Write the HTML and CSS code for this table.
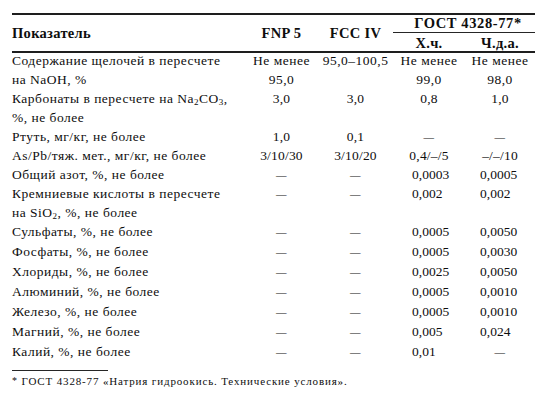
FILE: index.html
```html
<!DOCTYPE html>
<html>
<head>
  <meta charset="utf-8">
  <title>Показатели гидроксида натрия</title>
  <link rel="stylesheet" href="styles.css">
</head>
<body>
  <div class="page">
    <table class="spec">
      <colgroup>
        <col class="c-name">
        <col class="c-fnp">
        <col class="c-fcc">
        <col class="c-hch">
        <col class="c-chda">
      </colgroup>
      <thead>
        <tr class="head-top">
          <th class="name" rowspan="2">Показатель</th>
          <th rowspan="2">FNP 5</th>
          <th rowspan="2">FCC IV</th>
          <th class="gost" colspan="2">ГОСТ 4328-77*</th>
        </tr>
        <tr class="head-sub">
          <th>Х.ч.</th>
          <th>Ч.д.а.</th>
        </tr>
      </thead>
      <tbody>
        <tr class="first">
          <td class="name">Содержание щелочей в пересчете<br>на NaOH, %</td>
          <td>Не менее<br>95,0</td>
          <td>95,0–100,5</td>
          <td>Не менее<br>99,0</td>
          <td>Не менее<br>98,0</td>
        </tr>
        <tr>
          <td class="name">Карбонаты в пересчете на Na<sub>2</sub>CO<sub>3</sub>,<br>%, не более</td>
          <td class="val">3,0</td>
          <td class="val">3,0</td>
          <td class="val">0,8</td>
          <td class="val">1,0</td>
        </tr>
        <tr>
          <td class="name">Ртуть, мг/кг, не более</td>
          <td class="val">1,0</td>
          <td class="val">0,1</td>
          <td><span class="dash">—</span></td>
          <td><span class="dash">—</span></td>
        </tr>
        <tr>
          <td class="name">As/Pb/тяж. мет., мг/кг, не более</td>
          <td class="val">3/10/30</td>
          <td class="val">3/10/20</td>
          <td class="val">0,4/–/5</td>
          <td class="val">–/–/10</td>
        </tr>
        <tr>
          <td class="name">Общий азот, %, не более</td>
          <td><span class="dash">—</span></td>
          <td><span class="dash">—</span></td>
          <td class="num3">0,0003</td>
          <td class="num4">0,0005</td>
        </tr>
        <tr>
          <td class="name">Кремниевые кислоты в пересчете<br>на SiO<sub>2</sub>, %, не более</td>
          <td><span class="dash">—</span></td>
          <td><span class="dash">—</span></td>
          <td class="num3">0,002</td>
          <td class="num4">0,002</td>
        </tr>
        <tr class="loose">
          <td class="name">Сульфаты, %, не более</td>
          <td><span class="dash">—</span></td>
          <td><span class="dash">—</span></td>
          <td class="num3">0,0005</td>
          <td class="num4">0,0050</td>
        </tr>
        <tr class="loose">
          <td class="name">Фосфаты, %, не более</td>
          <td><span class="dash">—</span></td>
          <td><span class="dash">—</span></td>
          <td class="num3">0,0005</td>
          <td class="num4">0,0030</td>
        </tr>
        <tr class="loose">
          <td class="name">Хлориды, %, не более</td>
          <td><span class="dash">—</span></td>
          <td><span class="dash">—</span></td>
          <td class="num3">0,0025</td>
          <td class="num4">0,0050</td>
        </tr>
        <tr class="loose">
          <td class="name">Алюминий, %, не более</td>
          <td><span class="dash">—</span></td>
          <td><span class="dash">—</span></td>
          <td class="num3">0,0005</td>
          <td class="num4">0,0010</td>
        </tr>
        <tr class="loose">
          <td class="name">Железо, %, не более</td>
          <td><span class="dash">—</span></td>
          <td><span class="dash">—</span></td>
          <td class="num3">0,0005</td>
          <td class="num4">0,0010</td>
        </tr>
        <tr class="loose">
          <td class="name">Магний, %, не более</td>
          <td><span class="dash">—</span></td>
          <td><span class="dash">—</span></td>
          <td class="num3">0,005</td>
          <td class="num4">0,024</td>
        </tr>
        <tr class="loose">
          <td class="name">Калий, %, не более</td>
          <td><span class="dash">—</span></td>
          <td><span class="dash">—</span></td>
          <td class="num3">0,01</td>
          <td><span class="dash">—</span></td>
        </tr>
      </tbody>
    </table>

    <div class="note-rule"></div>
    <p class="note"><span class="star">*</span> ГОСТ 4328-77 «Натрия гидроокись. Технические условия».</p>
  </div>
</body>
</html>
```

FILE: styles.css
```css
/* book-style table, scanned page look */
body {
  margin: 0;
  background-color: #ffffff;
  color: #0e0e0e;
  font-family: "Liberation Serif", "Times New Roman", serif;
  font-size: 13.5px;
}

.page {
  padding: 13px 0 0 12px;
}

.spec {
  width: 523px;
  table-layout: fixed;
  border-collapse: collapse;
  border-top: 2px solid #1e1e1e;
}

.c-name { width: 233px; }
.c-fnp { width: 73px; }
.c-fcc { width: 75px; }
.c-hch { width: 72px; }
.c-chda { width: 70px; }

.spec th,
.spec td {
  padding: 0;
  line-height: 19px;
  letter-spacing: 0.5px;
  text-align: center;
  vertical-align: top;
  white-space: nowrap;
}

.spec th {
  font-size: 14.5px;
  font-weight: bold;
  letter-spacing: 0.3px;
  vertical-align: middle;
}

.spec .name {
  text-align: left;
}

.head-top .gost {
  line-height: 17px;
  letter-spacing: 0.6px;
  padding-left: 8px;
  border-bottom: 1px solid #262626;
}

.head-sub th {
  line-height: 15px;
  padding-top: 3px;
}

/* rule under the header, drawn without taking room */
.first td {
  background: linear-gradient(#1e1e1e, #1e1e1e) top / 100% 2px no-repeat;
}

.loose td {
  line-height: 20px;
}

.spec .val {
  letter-spacing: 0.2px;
}

.spec .num3 {
  text-align: left;
  padding-left: 19px;
  letter-spacing: 0;
}

.spec .num4 {
  text-align: left;
  padding-left: 15px;
  letter-spacing: 0;
}

.dash {
  font-size: 10.5px;
  line-height: 1;
}

sub {
  font-size: 9px;
  line-height: 0;
  vertical-align: -2px;
}

.note-rule {
  width: 96px;
  margin-top: 8px;
  border-top: 1px solid #262626;
}

.note {
  margin: 3px 0 0;
  font-size: 11px;
  line-height: 14px;
  letter-spacing: 0.85px;
}

.star {
  font-size: 10px;
  vertical-align: 1px;
}
```
